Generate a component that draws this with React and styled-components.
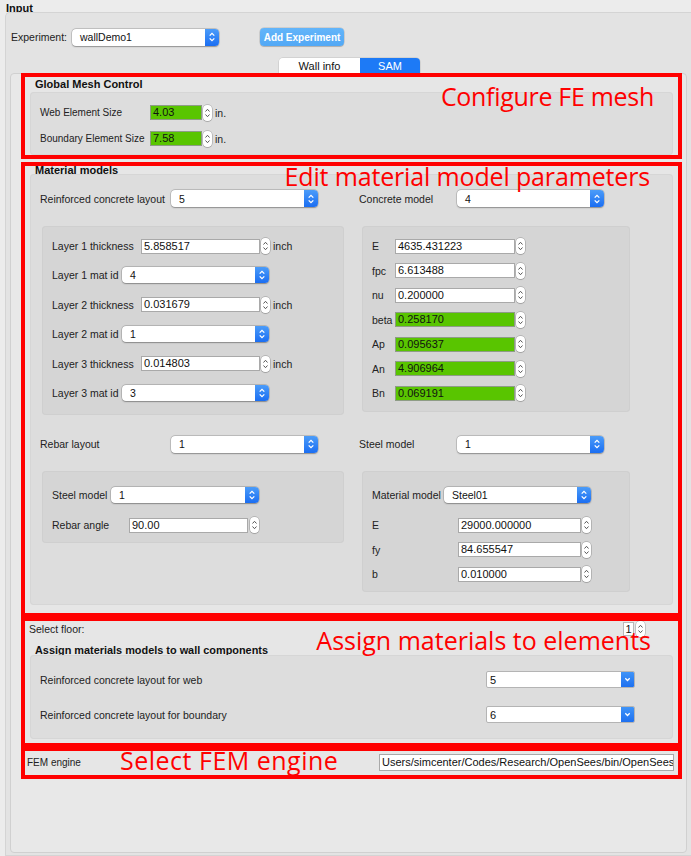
import React from "react"
import styled, { createGlobalStyle } from "styled-components"

const Global = createGlobalStyle`
  html, body { margin: 0; padding: 0; }
  body {
    background: #ececec;
    font-family: "Liberation Sans", Arial, sans-serif;
    color: #222;
  }
`

const Page = styled.div`
  width: 691px;
  height: 856px;
  overflow: hidden;
  display: flex;
  flex-direction: column;
`
const Heading = styled.div`
  height: 12px;
  line-height: 16px;
  padding-left: 6px;
  font-size: 11px;
  font-weight: 700;
  color: #111;
`
const Frame = styled.div`
  flex: 1;
  margin-left: 5px;
  background: #e3e3e3;
  border: 1px solid #d4d4d4;
  border-right: none;
  border-radius: 5px 0 0 0;
  display: flex;
  flex-direction: column;
`
const ExpRow = styled.div`
  display: flex;
  align-items: center;
  height: 18px;
  margin-top: 15px;
  padding-left: 5px;
`
const AddButton = styled.div`
  margin-left: 41px;
  width: 84px;
  height: 18px;
  box-sizing: border-box;
  border-radius: 4px;
  background: linear-gradient(#63b5fa, #52a8f5);
  box-shadow: 0 0 0 0.5px rgba(0, 0, 0, 0.18), 0 1px 1px rgba(0, 0, 0, 0.15);
  color: #fff;
  font-size: 10px;
  font-weight: 700;
  display: flex;
  align-items: center;
  justify-content: center;
`
const TabsRow = styled.div`
  display: flex;
  justify-content: center;
  padding-left: 2px;
  margin-top: 12px;
`
const Tabs = styled.div`
  display: flex;
  height: 15px;
  border-radius: 4px 4px 0 0;
  overflow: hidden;
  box-shadow: 0 0 0 0.5px rgba(0, 0, 0, 0.15);
`
const Tab = styled.div`
  width: ${p => p.w}px;
  display: flex;
  align-items: center;
  justify-content: center;
  font-size: 11px;
  background: ${p => (p.active ? "#1d7af6" : "#fff")};
  color: ${p => (p.active ? "#fff" : "#111")};
`
const Panel = styled.div`
  flex: 1;
  margin: 0 4px 2px 4px;
  background: #e8e8e8;
  border: 1px solid #d0d0d0;
  border-radius: 4px;
  display: flex;
  flex-direction: column;
`
const Box = styled.section`
  position: relative;
  margin: ${p => p.mt || 0}px 4px 0 10px;
  border: 4px solid #ff0000;
  background: #e6e6e6;
  display: flex;
  flex-direction: column;
`
const Annotation = styled.div`
  position: absolute;
  top: ${p => p.top}px;
  ${p => (p.right !== undefined ? `right: ${p.right}px;` : `left: ${p.left}px;`)}
  font-family: "Open Sans", "Noto Sans", sans-serif;
  font-size: 25px;
  line-height: 25px;
  letter-spacing: ${p => p.ls || 0}px;
  color: #ff0000;
  white-space: nowrap;
  pointer-events: none;
`
const Title = styled.div`
  height: ${p => p.h}px;
  line-height: ${p => p.lh || p.h}px;
  padding-top: ${p => p.pt || 0}px;
  padding-left: 10px;
  font-size: ${p => p.sz || 11}px;
  font-weight: 700;
  color: #111;
  white-space: nowrap;
`
const Group = styled.div`
  margin: ${p => p.mt || 0}px 5px ${p => p.mb || 0}px 5px;
  background: #dddddd;
  border-radius: 4px;
  box-shadow: inset 0 0 0 1px #d6d6d6;
  padding: ${p => p.pad};
  display: flex;
  flex-direction: column;
  gap: ${p => p.gap || 0}px;
`
const MatGrid = styled.div`
  display: grid;
  grid-template-columns: 319px 1fr;
  align-items: start;
`
const Inner = styled.div`
  margin-top: ${p => p.mt}px;
  margin-left: ${p => p.ml}px;
  width: ${p => p.w}px;
  box-sizing: border-box;
  background: #d5d5d5;
  border-radius: 4px;
  box-shadow: inset 0 0 0 1px #cfcfcf;
  padding: ${p => p.pad};
  display: flex;
  flex-direction: column;
`
const Row = styled.div`
  display: flex;
  align-items: center;
  height: ${p => p.h || 17}px;
  flex-shrink: 0;
  margin-top: ${p => p.mt || 0}px;
  justify-content: ${p => (p.spread ? "space-between" : "flex-start")};
  padding: ${p => p.pad || 0};
`
const Label = styled.span`
  ${p => (p.w ? `width: ${p.w}px;` : "")}
  flex-shrink: 0;
  font-size: ${p => p.sz || 10.5}px;
  margin-left: ${p => p.ml || 0}px;
  color: #222;
  white-space: nowrap;
`
const Unit = styled.span`
  margin-left: ${p => p.ml || 3}px;
  font-size: 10.5px;
  color: #222;
`
const LineEdit = styled.div`
  box-sizing: border-box;
  width: ${p => p.w}px;
  height: ${p => p.h || 15}px;
  flex-shrink: 0;
  background: ${p => (p.green ? "#59c500" : "#fff")};
  border: 1px solid ${p => (p.green ? "#8e9c86" : "#a9a9a9")};
  font-size: 11px;
  line-height: ${p => (p.h || 15) - 2}px;
  padding-left: 2px;
  color: #111;
  overflow: hidden;
  white-space: nowrap;
`
const SpinPill = styled.div`
  width: 9px;
  height: 16px;
  margin-left: ${p => p.ml || 1}px;
  flex-shrink: 0;
  background: #fff;
  border-radius: 4px;
  box-shadow: 0 0 0 0.5px rgba(0, 0, 0, 0.28), 0 0.5px 1px rgba(0, 0, 0, 0.2);
  display: flex;
  svg { display: block; }
`
const PopupBox = styled.div`
  width: ${p => p.w}px;
  height: ${p => p.h || 17}px;
  flex-shrink: 0;
  display: flex;
  background: #fff;
  border-radius: 4px;
  box-shadow: 0 0 0 0.5px rgba(0, 0, 0, 0.22), 0 0.5px 1.5px rgba(0, 0, 0, 0.28);
  overflow: hidden;
`
const PopupText = styled.span`
  flex: 1;
  padding-left: 8px;
  font-size: 10.5px;
  display: flex;
  align-items: center;
  color: #111;
`
const PopupArrow = styled.span`
  width: 14px;
  background: linear-gradient(#4b9cf9, #1b6ef2);
  display: flex;
  align-items: center;
  justify-content: center;
`
const ComboBox = styled.div`
  width: ${p => p.w}px;
  height: 17px;
  box-sizing: border-box;
  display: flex;
  background: #fff;
  border: 1px solid #b4b4b4;
  border-radius: 2px;
  overflow: hidden;
`
const ComboText = styled.span`
  flex: 1;
  padding-left: 3px;
  font-size: 11px;
  display: flex;
  align-items: center;
  color: #111;
`
const ComboArrow = styled.span`
  width: 13px;
  background: linear-gradient(#3f94f8, #1e70f0);
  display: flex;
  align-items: center;
  justify-content: center;
`
const Spacer = styled.div`
  flex: 1;
`
const FloorBox = styled.div`
  width: 11px;
  height: 14px;
  box-sizing: border-box;
  background: #fff;
  border: 1px solid #b8b8b8;
  font-size: 11px;
  line-height: 12px;
  text-align: center;
  color: #111;
`

const Spin = ({ ml }) => (
  <SpinPill ml={ml}>
    <svg width="9" height="16" viewBox="0 0 9 16">
      <path d="M2.5 6.5L4.5 4.3L6.5 6.5M2.5 9.5L4.5 11.7L6.5 9.5" fill="none" stroke="#555" strokeWidth="1" />
    </svg>
  </SpinPill>
)

const Popup = ({ w, value, h }) => (
  <PopupBox w={w} h={h}>
    <PopupText>{value}</PopupText>
    <PopupArrow>
      <svg width="14" height="14" viewBox="0 0 14 14">
        <path d="M4.7 5.6L7 3.3L9.3 5.6M4.7 8.4L7 10.7L9.3 8.4" fill="none" stroke="#fff" strokeWidth="1.3" />
      </svg>
    </PopupArrow>
  </PopupBox>
)

const Combo = ({ w, value }) => (
  <ComboBox w={w}>
    <ComboText>{value}</ComboText>
    <ComboArrow>
      <svg width="13" height="15" viewBox="0 0 13 15">
        <path d="M4.3 6.3L6.5 8.5L8.7 6.3" fill="none" stroke="#fff" strokeWidth="1.3" />
      </svg>
    </ComboArrow>
  </ComboBox>
)

const SpinField = ({ label, lw, lsz, w, value, green, unit, sml }) => (
  <Row>
    <Label w={lw} sz={lsz}>{label}</Label>
    <LineEdit w={w} green={green}>{value}</LineEdit>
    <Spin ml={sml} />
    {unit && <Unit>{unit}</Unit>}
  </Row>
)

const layers = [
  { kind: "t", label: "Layer 1 thickness", value: "5.858517" },
  { kind: "m", label: "Layer 1 mat id", value: "4" },
  { kind: "t", label: "Layer 2 thickness", value: "0.031679" },
  { kind: "m", label: "Layer 2 mat id", value: "1" },
  { kind: "t", label: "Layer 3 thickness", value: "0.014803" },
  { kind: "m", label: "Layer 3 mat id", value: "3" },
]

const concrete = [
  { label: "E", value: "4635.431223" },
  { label: "fpc", value: "6.613488" },
  { label: "nu", value: "0.200000" },
  { label: "beta", value: "0.258170", green: true },
  { label: "Ap", value: "0.095637", green: true },
  { label: "An", value: "4.906964", green: true },
  { label: "Bn", value: "0.069191", green: true },
]

const steel = [
  { label: "E", value: "29000.000000", mt: 13 },
  { label: "fy", value: "84.655547", mt: 7.5 },
  { label: "b", value: "0.010000", mt: 7.5 },
]

export default function App() {
  return (
    <Page>
      <Global />
      <Heading>Input</Heading>
      <Frame>
        <ExpRow>
          <Label w={61}>Experiment:</Label>
          <Popup w={147} value="wallDemo1" />
          <AddButton>Add Experiment</AddButton>
        </ExpRow>
        <TabsRow>
          <Tabs>
            <Tab w={81}>Wall info</Tab>
            <Tab w={60} active>SAM</Tab>
          </Tabs>
        </TabsRow>
        <Panel>
          <Box mt={-1}>
            <Title h={14}>Global Mesh Control</Title>
            <Group mt={1} pad="12px 10px 8px" gap={9}>
              <SpinField label="Web Element Size" lw={110} lsz={10} w={52} value="4.03" green unit="in." />
              <SpinField label="Boundary Element Size" lw={110} lsz={10} w={52} value="7.58" green unit="in." />
            </Group>
            <Annotation top={7} right={24} ls={-0.3}>Configure FE mesh</Annotation>
          </Box>

          <Box mt={3}>
            <Title h={8} lh={8}>Material models</Title>
            <Group mb={8} pad="16px 0 12.5px 10px">
              <MatGrid>
                <Row>
                  <Label w={131}>Reinforced concrete layout</Label>
                  <Popup w={147} value="5" />
                </Row>
                <Row>
                  <Label w={98}>Concrete model</Label>
                  <Popup w={147} value="4" />
                </Row>
                <Inner mt={19} ml={2} w={302} pad="11.5px 10px 13.5px">
                  {layers.map((l, i) => (
                    <Row key={l.label} mt={i ? 12.4 : 0}>
                      {l.kind === "t" ? (
                        <>
                          <Label w={89}>{l.label}</Label>
                          <LineEdit w={119}>{l.value}</LineEdit>
                          <Spin />
                          <Unit>inch</Unit>
                        </>
                      ) : (
                        <>
                          <Label w={70}>{l.label}</Label>
                          <Popup w={147} h={16} value={l.value} />
                        </>
                      )}
                    </Row>
                  ))}
                </Inner>
                <Inner mt={19} ml={3} w={268} pad="12px 10px 11px">
                  {concrete.map((c, i) => (
                    <Row key={c.label} h={16} mt={i ? 8.5 : 0}>
                      <Label w={23}>{c.label}</Label>
                      <LineEdit w={120} green={c.green}>{c.value}</LineEdit>
                      <Spin />
                    </Row>
                  ))}
                </Inner>
                <Row mt={21}>
                  <Label w={131}>Rebar layout</Label>
                  <Popup w={147} value="1" />
                </Row>
                <Row mt={21}>
                  <Label w={98}>Steel model</Label>
                  <Popup w={147} value="1" />
                </Row>
                <Inner mt={18} ml={2} w={302} pad="16px 10px 9.5px">
                  <Row>
                    <Label w={59}>Steel model</Label>
                    <Popup w={148} h={16} value="1" />
                  </Row>
                  <Row mt={13}>
                    <Label w={77}>Rebar angle</Label>
                    <LineEdit w={119}>90.00</LineEdit>
                    <Spin ml={2} />
                  </Row>
                </Inner>
                <Inner mt={18} ml={3} w={268} pad="16px 10px 9.5px">
                  <Row>
                    <Label w={72}>Material model</Label>
                    <Popup w={147} h={16} value="Steel01" />
                  </Row>
                  {steel.map(s => (
                    <Row key={s.label} mt={s.mt}>
                      <Label w={86}>{s.label}</Label>
                      <LineEdit w={123}>{s.value}</LineEdit>
                      <Spin />
                    </Row>
                  ))}
                </Inner>
              </MatGrid>
            </Group>
            <Annotation top={-2} right={28} ls={-0.15}>Edit material model parameters</Annotation>
          </Box>

          <Box>
            <Row h={15} mt={1} pad="0 33px 0 4px">
              <Label>Select floor:</Label>
              <Spacer />
              <FloorBox>1</FloorBox>
              <Spin ml={2} />
            </Row>
            <Title h={10} lh={10} pt={8} sz={10.9}>Assign materials models to wall components</Title>
            <Group mb={4} pad="16.5px 38px 15.5px 10px" gap={18}>
              <Row spread>
                <Label>Reinforced concrete layout for web</Label>
                <Combo w={149} value="5" />
              </Row>
              <Row spread>
                <Label>Reinforced concrete layout for boundary</Label>
                <Combo w={149} value="6" />
              </Row>
            </Group>
            <Annotation top={7} right={27} ls={0}>Assign materials to elements</Annotation>
          </Box>

          <Box>
            <Row h={24} spread pad="0 4px 0 2px">
              <Label sz={10}>FEM engine</Label>
              <LineEdit w={295} h={17}>Users/simcenter/Codes/Research/OpenSees/bin/OpenSees</LineEdit>
            </Row>
            <Annotation top={-3} left={95} ls={0.5}>Select FEM engine</Annotation>
          </Box>
        </Panel>
      </Frame>
    </Page>
  )
}
